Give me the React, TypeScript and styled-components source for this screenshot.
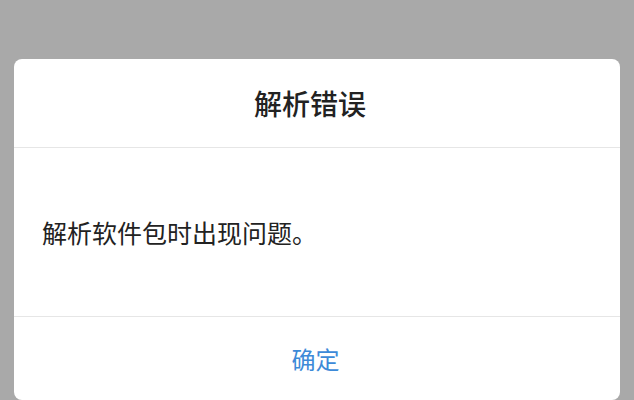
import React from "react";
import styled, { createGlobalStyle } from "styled-components";

const Global = createGlobalStyle`
  html, body { margin: 0; padding: 0; }
  body {
    background: #a9a9a9;
    font-family: "Noto Sans CJK SC", "Noto Sans", sans-serif;
    overflow: hidden;
  }
`;

const Overlay = styled.div`
  width: 634px;
  height: 400px;
  box-sizing: border-box;
  padding: 59px 14px 0 14px;
  background: #a9a9a9;
  overflow: hidden;
  display: flex;
  flex-direction: column;
`;

const Dialog = styled.div`
  width: 606px;
  height: 341px;
  background: #ffffff;
  border-radius: 8px;
  display: flex;
  flex-direction: column;
  overflow: hidden;
`;

const Header = styled.div`
  height: 88px;
  display: flex;
  align-items: center;
  justify-content: center;
  border-bottom: 1px solid #e6e6e6;
  flex-shrink: 0;
`;

const Title = styled.h2`
  margin: 0 14px 0 0;
  font-size: 28px;
  font-weight: 500;
  color: #222222;
  line-height: 1;
`;

const Body = styled.div`
  height: 168px;
  display: flex;
  align-items: center;
  padding: 0 28px;
  border-bottom: 1px solid #e6e6e6;
  flex-shrink: 0;
`;

const Message = styled.p`
  margin: 0;
  font-size: 25px;
  color: #222222;
  line-height: 1;
`;

const Footer = styled.div`
  flex: 1;
  display: flex;
  align-items: center;
  justify-content: center;
`;

const Button = styled.button`
  border: none;
  background: none;
  padding: 0;
  margin-right: 3px;
  font-family: inherit;
  font-size: 24px;
  color: #3d8ad8;
  line-height: 1;
  cursor: pointer;
`;

export default function App() {
  return (
    <>
      <Global />
      <Overlay>
        <Dialog>
          <Header>
            <Title>解析错误</Title>
          </Header>
          <Body>
            <Message>解析软件包时出现问题。</Message>
          </Body>
          <Footer>
            <Button>确定</Button>
          </Footer>
        </Dialog>
      </Overlay>
    </>
  );
}
